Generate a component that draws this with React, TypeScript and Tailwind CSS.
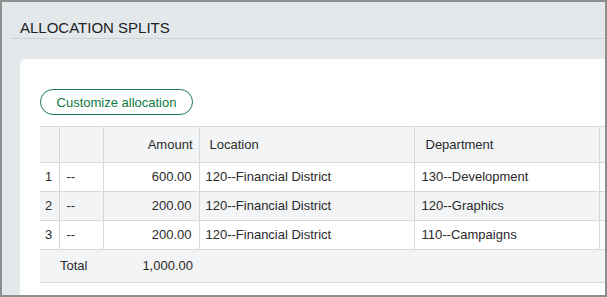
import React from 'react';

type Row = { n: number; split: string; amount: string; location: string; department: string };

const ROWS: Row[] = [
  { n: 1, split: '--', amount: '600.00', location: '120--Financial District', department: '130--Development' },
  { n: 2, split: '--', amount: '200.00', location: '120--Financial District', department: '120--Graphics' },
  { n: 3, split: '--', amount: '200.00', location: '120--Financial District', department: '110--Campaigns' },
];

const App: React.FC = () => {
  return (
    <div className="w-[607px] h-[297px] border-2 border-[#8e8e8e] bg-[#e3e8eb] overflow-hidden font-['Liberation_Sans',Arial,sans-serif] text-[#2a2a2a]">
      {/* Section header */}
      <div className="ml-2 h-[37px] border-b border-[#ccd2d6] flex items-end pb-[3px] pl-[10px]">
        <h2 className="text-[15px] text-[#222] leading-none">ALLOCATION SPLITS</h2>
      </div>

      {/* Card */}
      <div className="ml-[18px] mt-5 bg-white rounded-tl-md h-[240px] pt-[30px] pl-5 overflow-hidden">
        <button className="h-[26px] w-[153px] rounded-full border border-[#1a7d4a] text-[#0c7a43] text-[13px] leading-none">
          Customize allocation
        </button>

        <table className="mt-[11px] table-fixed border-collapse text-[13px] w-[600px]">
          <colgroup>
            <col className="w-[19px]" />
            <col className="w-[44px]" />
            <col className="w-[96px]" />
            <col className="w-[215px]" />
            <col className="w-[185px]" />
            <col />
          </colgroup>
          <thead>
            <tr className="h-[36px] bg-[#f2f4f5] border-t border-b border-[#d4d9dd]">
              <th className="border-r border-[#d4d9dd]"></th>
              <th className="border-r border-[#d4d9dd]"></th>
              <th className="border-r border-[#d4d9dd] text-right font-normal pr-[6px]">Amount</th>
              <th className="border-r border-[#d4d9dd] text-left font-normal pl-[10px]">Location</th>
              <th className="border-r border-[#d4d9dd] text-left font-normal pl-[11px]">Department</th>
              <th></th>
            </tr>
          </thead>
          <tbody>
            {ROWS.map((r, i) => (
              <tr key={r.n} className={`h-[29px] border-b border-[#d4d9dd] ${i % 2 === 1 ? 'bg-[#f2f4f5]' : 'bg-white'}`}>
                <td className="border-r border-[#d4d9dd] pl-[5px]">{r.n}</td>
                <td className="border-r border-[#d4d9dd] pl-[7px]">{r.split}</td>
                <td className="border-r border-[#d4d9dd] text-right pr-[7px]">{r.amount}</td>
                <td className="border-r border-[#d4d9dd] pl-[6px]">{r.location}</td>
                <td className="border-r border-[#d4d9dd] pl-[7px]">{r.department}</td>
                <td></td>
              </tr>
            ))}
            <tr className="h-[33px] bg-[#f2f4f5] border-b border-[#d4d9dd]">
              <td></td>
              <td className="pl-[1px]">Total</td>
              <td className="text-right pr-[6px]">1,000.00</td>
              <td></td>
              <td></td>
              <td></td>
            </tr>
          </tbody>
        </table>
      </div>
    </div>
  );
};

export default App;
